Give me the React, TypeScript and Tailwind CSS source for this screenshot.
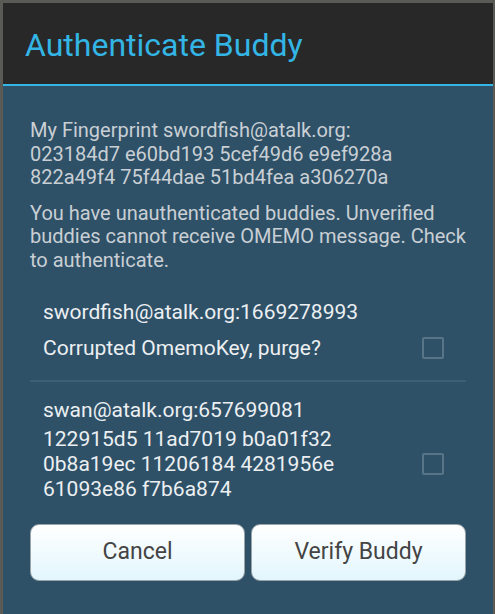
export default function App() {
  const buddies = [
    {
      id: "swordfish@atalk.org:1669278993",
      lines: ["Corrupted OmemoKey, purge?"],
    },
    {
      id: "swan@atalk.org:657699081",
      lines: ["122915d5 11ad7019 b0a01f32", "0b8a19ec 11206184 4281956e", "61093e86 f7b6a874"],
    },
  ];

  return (
    <div className="w-[495px] h-[614px] overflow-hidden bg-[#5a5a56] pl-[3px] pt-[3px] pr-[2px] font-['Roboto',sans-serif]">
      <div className="flex flex-col h-full bg-[#2e5168]">
        {/* Title */}
        <div className="h-[83px] bg-[#282828] flex items-center pl-[22px] pt-[3px] border-b-2 border-[#33b5e5]">
          <h1 className="text-[32px] text-[#33b5e5] leading-none">Authenticate Buddy</h1>
        </div>

        {/* Body */}
        <div className="pl-[27px] pr-[16px] pt-[33px] text-[#c9cfd4] text-[20px] leading-[23.5px]">
          <p>
            My Fingerprint swordfish@atalk.org:
            <br />
            023184d7 e60bd193 5cef49d6 e9ef928a
            <br />
            822a49f4 75f44dae 51bd4fea a306270a
          </p>
          <p className="mt-[12px]">
            You have unauthenticated buddies. Unverified buddies cannot receive OMEMO message. Check to authenticate.
          </p>
        </div>

        {/* Buddy list */}
        <div className="px-[27px] mt-[28px] text-[#eceff1] text-[21px]">
          {buddies.map((b, i) => (
            <div key={b.id}>
              {i > 0 && <div className="h-[2px] bg-[#3d5f76] mt-[20px] mb-[16px]" />}
              <div className="flex items-center pl-[13px] pr-[22px]">
                <div className="flex-1">
                  <div className="leading-[24px]">{b.id}</div>
                  <div className={i === 0 ? "mt-[12px] leading-[24px]" : "mt-[5px] leading-[25px]"}>
                    {b.lines.map((l) => (
                      <div key={l}>{l}</div>
                    ))}
                  </div>
                </div>
                <div className={"w-[22px] h-[22px] border-2 border-[#587588] rounded-[2px] " + (i === 0 ? "mt-[36px]" : "mt-[28px]")} />
              </div>
            </div>
          ))}
        </div>

        {/* Buttons */}
        <div className="flex gap-[6px] px-[27px] mt-[22px]">
          {["Cancel", "Verify Buddy"].map((t) => (
            <button
              key={t}
              className="flex-1 h-[57px] rounded-[9px] border border-[#9aa4a8] bg-gradient-to-b from-[#ffffff] to-[#e2f6fd] text-[#444444] text-[23px]"
            >
              {t}
            </button>
          ))}
        </div>
      </div>
    </div>
  );
}
